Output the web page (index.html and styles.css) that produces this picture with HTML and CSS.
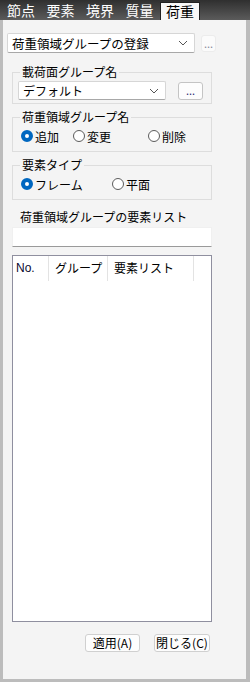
FILE: index.html
```html
<!DOCTYPE html>
<html lang="ja">
<head>
    <meta charset="UTF-8">
    <title>荷重領域グループ</title>
    <link rel="stylesheet" href="styles.css">
</head>
<body>
    <div class="tabs">
        <span class="tab">節点</span>
        <span class="tab">要素</span>
        <span class="tab">境界</span>
        <span class="tab">質量</span>
        <span class="tab active">荷重</span>
    </div>
    <div class="panel">
        <div class="top-row">
            <div class="combo combo-main">
                <span>荷重領域グループの登録</span>
                <svg class="chevron" width="10" height="6" viewBox="0 0 10 6"><path d="M1 1 L5 5 L9 1" fill="none" stroke="#555" stroke-width="1"/></svg>
            </div>
            <div class="dots dots-flat">...</div>
        </div>

        <fieldset class="group">
            <legend>載荷面グループ名</legend>
            <div class="combo-row">
                <div class="combo combo-sub">
                    <span>デフォルト</span>
                    <svg class="chevron" width="10" height="6" viewBox="0 0 10 6"><path d="M1 1 L5 5 L9 1" fill="none" stroke="#555" stroke-width="1"/></svg>
                </div>
                <div class="dots dots-btn">...</div>
            </div>
        </fieldset>

        <fieldset class="group">
            <legend>荷重領域グループ名</legend>
            <div class="radios">
                <span class="radio w52"><i class="dot on"></i>追加</span>
                <span class="radio w75"><i class="dot"></i>変更</span>
                <span class="radio"><i class="dot"></i>削除</span>
            </div>
        </fieldset>

        <fieldset class="group">
            <legend>要素タイプ</legend>
            <div class="radios">
                <span class="radio w91"><i class="dot on"></i>フレーム</span>
                <span class="radio"><i class="dot"></i>平面</span>
            </div>
        </fieldset>

        <div class="list-label">荷重領域グループの要素リスト</div>
        <div class="text-input"></div>

        <div class="listbox">
            <div class="list-head">
                <span class="col col-no">No.</span>
                <span class="col col-group">グループ</span>
                <span class="col col-elem">要素リスト</span>
            </div>
        </div>

        <div class="actions">
            <div class="btn btn-apply">適用(A)</div>
            <div class="btn btn-close">閉じる(C)</div>
        </div>
    </div>
</body>
</html>
```

FILE: styles.css
```css
html, body {
    margin: 0;
    padding: 0;
}
body {
    width: 250px;
    height: 682px;
    font-family: "Noto Sans CJK JP", "Noto Sans", sans-serif;
    font-size: 12px;
    color: #000;
    background: #f3f3f3;
    overflow: hidden;
}
.tabs {
    height: 20px;
    display: flex;
    align-items: flex-end;
    background: linear-gradient(to bottom, #2f2f2f, #5b5b5b);
    padding-left: 7px;
    box-sizing: border-box;
}
.tab {
    color: #fff;
    font-size: 14px;
    line-height: 18px;
    height: 19px;
    margin-right: 11.5px;
}
.tab.active {
    background: #f8f8f8;
    color: #000;
    border: 1px solid #222;
    border-bottom: none;
    padding: 0 5px;
    margin-left: -5px;
    height: 17px;
    line-height: 16px;
}
.panel {
    height: 662px;
    box-sizing: border-box;
    border: 3px solid #bcbcbc;
    border-top: none;
    border-right-width: 4px;
    background: #f4f4f4;
    display: flex;
    flex-direction: column;
}
.top-row {
    display: flex;
    align-items: center;
    margin: 13px 0 0 4px;
}
.combo {
    background: #fff;
    border: 1px solid #d6d6d6;
    border-bottom-color: #a8a8a8;
    border-radius: 2px;
    box-sizing: border-box;
    display: flex;
    align-items: center;
    justify-content: space-between;
    padding: 0 6px 0 4px;
}
.combo-main {
    width: 188px;
    height: 20px;
    font-size: 12.5px;
}
.combo-sub {
    width: 148px;
    height: 19px;
}
.dots {
    box-sizing: border-box;
    text-align: center;
    color: #2a2a70;
    font-size: 11px;
}
.dots-flat {
    width: 15px;
    height: 17px;
    margin-left: 6px;
    background: #fbfbfb;
    border: 1px solid #ececec;
    border-radius: 3px;
    line-height: 14px;
    color: #8a8a9a;
}
.dots-btn {
    width: 25px;
    height: 18px;
    margin-left: 12px;
    background: #fdfdfd;
    border: 1px solid #c4c4c4;
    border-radius: 3px;
    line-height: 14px;
}
.group {
    margin: 6px 0 0 9px;
    width: 200px;
    box-sizing: border-box;
    border: 1px solid #dddddd;
    padding: 0 5px 3px 5px;
}
.group legend {
    padding: 0 2px;
    margin-left: 2px;
    line-height: 14px;
    font-size: 12px;
}
.group:first-of-type {
    margin-top: 12px;
}
.combo-row {
    display: flex;
    align-items: center;
    margin-top: 2px;
}
.radios {
    display: flex;
    align-items: center;
    height: 14px;
    padding: 5px 0 5px 3px;
}
.radio {
    display: flex;
    align-items: center;
    gap: 2px;
}
.w52 { width: 52px; }
.w75 { width: 75px; }
.w91 { width: 91px; }
.dot {
    display: block;
    width: 12px;
    height: 12px;
    box-sizing: border-box;
    border-radius: 50%;
    border: 1px solid #5c5c5c;
    background: #fff;
}
.dot.on {
    border: 4px solid #0067c0;
    background: #fff;
}
.list-label {
    margin: 10px 0 0 17px;
    line-height: 14px;
}
.text-input {
    margin: 3px 0 0 9px;
    width: 200px;
    height: 20px;
    box-sizing: border-box;
    background: #fff;
    border: 1px solid #f0f0f0;
    border-bottom-color: #9a9a9a;
}
.listbox {
    margin: 8px 0 0 9px;
    width: 200px;
    height: 367px;
    box-sizing: border-box;
    background: #fff;
    border: 1px solid #8f8f9f;
}
.list-head {
    display: flex;
    height: 25px;
}
.col {
    box-sizing: border-box;
    border-right: 1px solid #e3e3e3;
    padding: 5px 0 0 6px;
    line-height: 14px;
}
.col-no {
    width: 36px;
    padding-left: 3px;
    font-family: "Liberation Sans", Arial, sans-serif;
    color: #0a0a30;
}
.col-group { width: 59px; }
.col-elem { width: 86px; }
.actions {
    display: flex;
    margin: 12px 0 0 82px;
    gap: 14px;
}
.btn {
    height: 18px;
    box-sizing: border-box;
    background: #fdfdfd;
    border: 1px solid #d0d0d0;
    border-radius: 3px;
    text-align: center;
    line-height: 16px;
}
.btn-apply { width: 55px; }
.btn-close { width: 56px; }
```
